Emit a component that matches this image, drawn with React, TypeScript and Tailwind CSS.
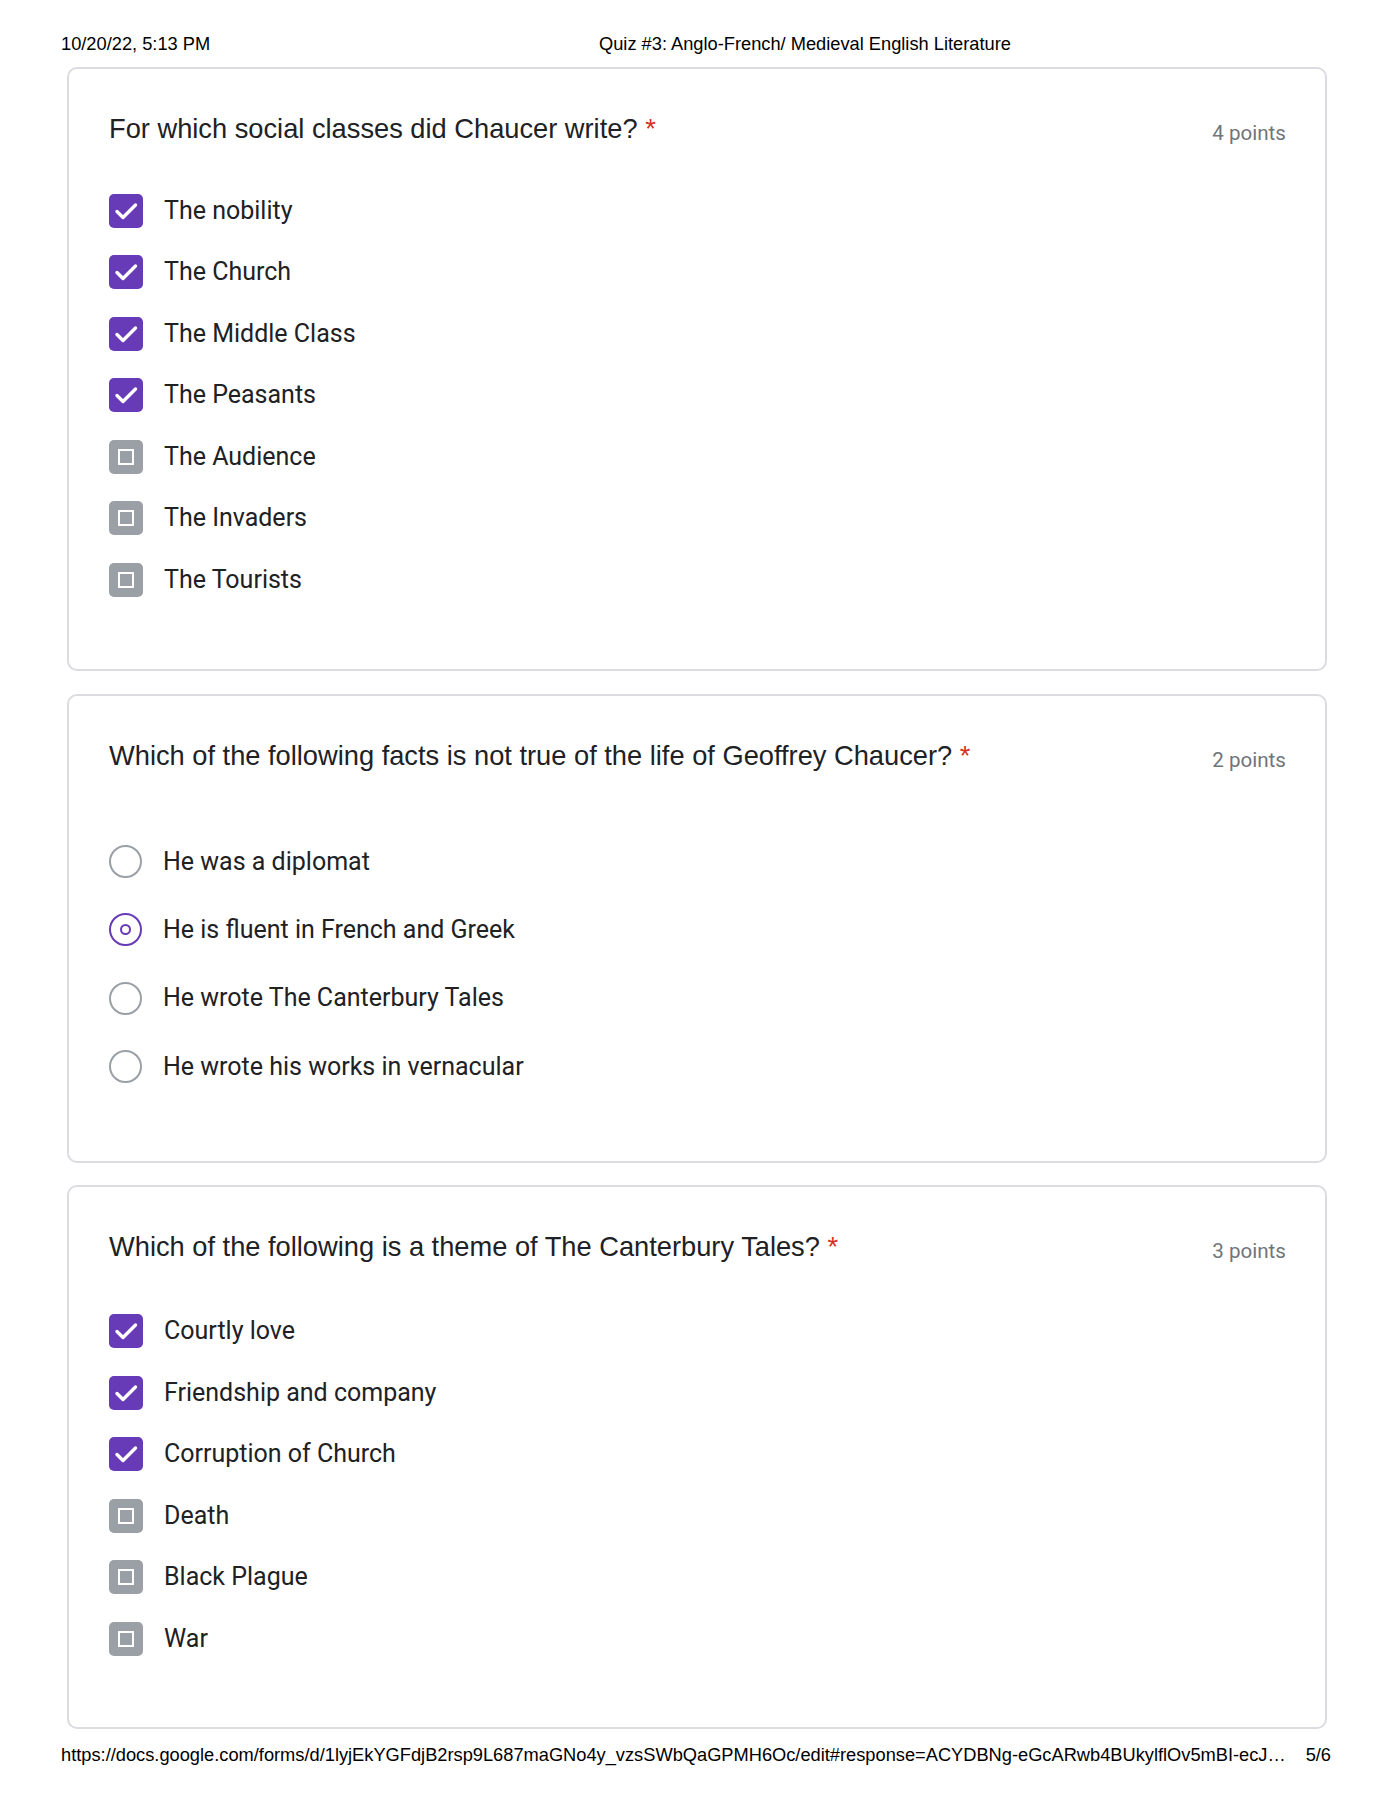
import type { FC } from "react";

type Question = {
  title: string;
  points: string;
  kind: "checkbox" | "radio";
  options: { label: string; selected: boolean }[];
};

const questions: Question[] = [
  {
    title: "For which social classes did Chaucer write?",
    points: "4 points",
    kind: "checkbox",
    options: [
      { label: "The nobility", selected: true },
      { label: "The Church", selected: true },
      { label: "The Middle Class", selected: true },
      { label: "The Peasants", selected: true },
      { label: "The Audience", selected: false },
      { label: "The Invaders", selected: false },
      { label: "The Tourists", selected: false },
    ],
  },
  {
    title: "Which of the following facts is not true of the life of Geoffrey Chaucer?",
    points: "2 points",
    kind: "radio",
    options: [
      { label: "He was a diplomat", selected: false },
      { label: "He is fluent in French and Greek", selected: true },
      { label: "He wrote The Canterbury Tales", selected: false },
      { label: "He wrote his works in vernacular", selected: false },
    ],
  },
  {
    title: "Which of the following is a theme of The Canterbury Tales?",
    points: "3 points",
    kind: "checkbox",
    options: [
      { label: "Courtly love", selected: true },
      { label: "Friendship and company", selected: true },
      { label: "Corruption of Church", selected: true },
      { label: "Death", selected: false },
      { label: "Black Plague", selected: false },
      { label: "War", selected: false },
    ],
  },
];

const CheckBox: FC<{ checked: boolean }> = ({ checked }) =>
  checked ? (
    <span className="flex h-[34px] w-[34px] items-center justify-center rounded-[5px] bg-[#673ab7]">
      <svg width="34" height="34" viewBox="0 0 34 34" fill="none">
        <path
          d="M8 17.5 L14 23.5 L26.5 11"
          stroke="#fff"
          strokeWidth="3.4"
          strokeLinecap="round"
          strokeLinejoin="round"
        />
      </svg>
    </span>
  ) : (
    <span className="flex h-[34px] w-[34px] items-center justify-center rounded-[5px] bg-[#9aa0a6]">
      <span className="h-[16px] w-[16px] border-2 border-white" />
    </span>
  );

const Radio: FC<{ checked: boolean }> = ({ checked }) =>
  checked ? (
    <span className="flex h-[33px] w-[33px] items-center justify-center rounded-full border-2 border-[#673ab7]">
      <span className="h-[11px] w-[11px] rounded-full border-2 border-[#673ab7]" />
    </span>
  ) : (
    <span className="h-[33px] w-[33px] rounded-full border-2 border-[#9aa0a6]" />
  );

const QuestionCard: FC<{ q: Question; className: string; listGap: string }> = ({
  q,
  className,
  listGap,
}) => {
  const isRadio = q.kind === "radio";
  return (
    <div
      className={`ml-[67px] w-[1260px] rounded-[10px] border-2 border-[#dadce0] bg-white pl-[40px] pr-[39px] pt-[44px] ${className}`}
    >
      <div className="flex h-[32px] items-start justify-between">
        <div className="font-['Liberation_Sans',Arial,sans-serif] text-[27.25px] leading-[32px] text-[#202124]">
          {q.title} <span className="text-[#d93025]">*</span>
        </div>
        <div className="pt-[8px] font-['Roboto',sans-serif] text-[20.6px] leading-[24px] text-[#70757a]">
          {q.points}
        </div>
      </div>
      <div className={listGap}>
        {q.options.map((o) => (
          <div
            key={o.label}
            className={`flex items-center ${isRadio ? "h-[68.3px]" : "h-[61.5px]"}`}
          >
            {isRadio ? <Radio checked={o.selected} /> : <CheckBox checked={o.selected} />}
            <span className="ml-[21px] font-['Roboto',sans-serif] text-[25px] leading-[30px] text-[#202124]">
              {o.label}
            </span>
          </div>
        ))}
      </div>
    </div>
  );
};

export default function App() {
  return (
    <div className="min-h-[1800px] w-[1390px] bg-white font-['Liberation_Sans',Arial,sans-serif] text-black">
      <div className="grid grid-cols-[538px_1fr] px-[61px] pt-[33px] text-[18.25px] leading-[22px]">
        <span>10/20/22, 5:13 PM</span>
        <span>Quiz #3: Anglo-French/ Medieval English Literature</span>
      </div>

      <QuestionCard q={questions[0]} className="mt-[12px] pb-[58px]" listGap="mt-[35px]" />
      <QuestionCard q={questions[1]} className="mt-[23px] pb-[60px]" listGap="mt-[56px]" />
      <QuestionCard q={questions[2]} className="mt-[22px] pb-[57px]" listGap="mt-[38px]" />

      <div className="mt-[15px] flex justify-between pl-[61px] pr-[59px] text-[18.25px] leading-[22px]">
        <span>
          https://docs.google.com/forms/d/1lyjEkYGFdjB2rsp9L687maGNo4y_vzsSWbQaGPMH6Oc/edit#response=ACYDBNg-eGcARwb4BUkylflOv5mBI-ecJ…
        </span>
        <span>5/6</span>
      </div>
    </div>
  );
}
